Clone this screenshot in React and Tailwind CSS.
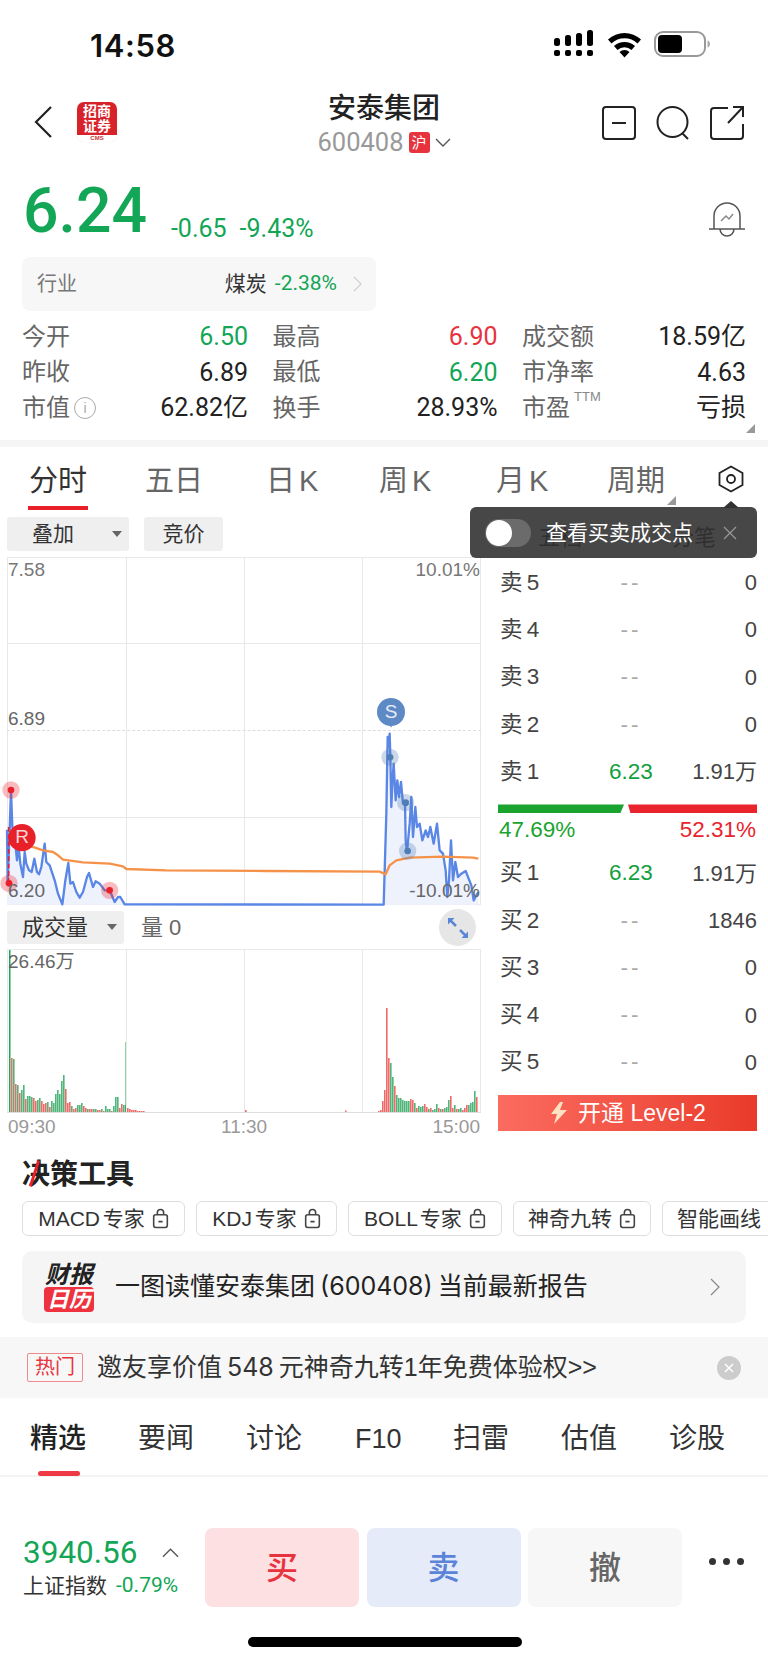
import React from "react";

const GREEN = "text-[#12a656]";
const RED = "text-[#e8333f]";

// price line, in 3x chart coordinates (viewBox below)
const PRICE = [
  [22,1168],[24,1325],[30,1170],[34,1050],[38,1160],[45,1190],[52,1260],[57,1220],[62,1270],[70,1310],[75,1235],[80,1270],[88,1290],[96,1295],[104,1255],[112,1295],[118,1302],[125,1280],[135,1210],[140,1265],[150,1275],[165,1320],[175,1360],[188,1392],[197,1320],[206,1268],[212,1330],[220,1325],[230,1355],[240,1372],[250,1355],[262,1310],[268,1298],[280,1340],[288,1323],[300,1330],[315,1350],[330,1350],[345,1385],[355,1370],[362,1370],[375,1392],
  [1152,1393],[1160,1120],[1164,890],[1166,920],[1170,880],[1172,950],[1175,1100],[1178,1030],[1182,970],[1188,1080],[1193,1020],[1198,1070],[1204,1025],[1210,1090],[1216,1085],[1218,1200],[1222,1235],[1230,1150],[1235,1070],[1240,1190],[1247,1100],[1252,1160],[1260,1150],[1268,1200],[1278,1170],[1285,1190],[1292,1160],[1302,1210],[1312,1150],[1320,1230],[1330,1240],[1338,1290],[1343,1370],[1348,1320],[1354,1200],[1360,1320],[1367,1265],[1375,1310],[1385,1300],[1398,1292],[1415,1335],[1422,1380],[1430,1365],[1436,1355],
];
const AVG = [[95,1218],[130,1230],[160,1235],[175,1245],[190,1258],[250,1266],[330,1270],[370,1278],[380,1286],[500,1290],[800,1292],[1140,1294],[1158,1302],[1170,1275],[1190,1260],[1230,1252],[1330,1249],[1420,1252],[1436,1255]];
const toPts = (a) => a.map((p) => p.join(",")).join(" ");

// volume bars: height in px, g/r. two px apart
const VOL_AM = "55r 54g 29r 28g 20r 23g 28g 14r 17g 17g 16g 15r 12r 13g 15g 12r 9r 10r 11g 6r 12g 10g 19g 23g 19g 32g 38g 24r 10r 11r 7g 4r 5r 8g 8g 10g 7r 5r 4g 4r 4r 4g 4g 3r 3r 4g 2r 7g 4g 4g 2r 7g 16g 16g 5r 9r 8g 8g".split(" ");
const VOL_AM2 = "5r 4r 3r 3r 3r 2r 2r 2r 2r 1r 1r 1r 1r 1r 1r".split(" ");
const VOL_PM = "1r 1r 1r 1r 2r 3r 12r 23r 105r 55r 50g 36g 27r 18g 15g 15g 13g 12g 12g 12g 14r 13r 10g 5r 7g 6g 7g 9r 6r 4g 5r 3g 4g 9g 5r 4g 4r 5g 6g 13g 17r 5r 8g 4r 4g 5g 3r 5r 8r 8g 10g 11g 22g 16r".split(" ");

function Volume() {
  const bars = [];
  VOL_AM.forEach((v, i) => bars.push([11 + i * 2, v]));
  VOL_AM2.forEach((v, i) => bars.push([127 + i * 2, v]));
  for (let x = 157; x < 370; x += 2) {
    const h = x === 245 ? 3 : x === 345 ? 2.5 : 1;
    bars.push([x, h + "r"]);
  }
  VOL_PM.forEach((v, i) => bars.push([370 + i * 2, v]));
  return (
    <svg viewBox="0 0 474 163" className="block w-[474px] h-[163px]">
      {bars.map(([x, v], i) => {
        const h = parseFloat(v);
        return <rect key={i} x={x - 7} y={163 - h} width="1.6" height={h} fill={v.endsWith("g") ? "#4fb57a" : "#f06a6a"} />;
      })}
      <rect x="2" y="0" width="1.5" height="163" fill="#1fa855" />
      <rect x="118.5" y="92" width="1.5" height="71" fill="#1fa855" />
    </svg>
  );
}

const Grid = ({ className = "" }) => (
  <div className={`absolute inset-0 grid grid-cols-[119px_118px_118px_1fr] border border-[#e8e8e8] ${className}`}>
    <div className="border-r border-[#e8e8e8]" />
    <div className="border-r border-[#e8e8e8]" />
    <div className="border-r border-[#e8e8e8]" />
    <div />
  </div>
);

function PriceChart() {
  const fill = `22,1393 ${toPts(PRICE)} 1436,1393`;
  return (
    <div className="relative w-[474px] h-[348px]">
      <Grid />
      <div className="absolute inset-x-0 top-[86px] border-t border-[#e8e8e8]" />
      <div className="absolute inset-x-0 top-[173px] border-t border-dashed border-[#dcdcdc]" />
      <div className="absolute inset-x-0 top-[260px] border-t border-[#e8e8e8]" />
      <svg viewBox="22 350 1422 1044" className="absolute inset-0 w-[474px] h-[348px] overflow-visible">
        <polygon points={fill} fill="#eef2fd" />
        <polyline points={toPts(PRICE)} fill="none" stroke="#5a86e6" strokeWidth="7" strokeLinejoin="round" />
        <polyline points={toPts(AVG)} fill="none" stroke="#f5924a" strokeWidth="7" strokeLinejoin="round" />
        <line x1="27" y1="1160" x2="27" y2="1329" stroke="#e8202a" strokeWidth="5" strokeDasharray="14 8" />
        {[[34,1049],[28,1329],[330,1350]].map(([x, y]) => (
          <g key={x}>
            <circle cx={x} cy={y} r="26" fill="#e8202a" opacity="0.3" />
            <circle cx={x} cy={y} r="10" fill="#e8202a" />
          </g>
        ))}
        {[[1171,951],[1218,1087],[1224,1232]].map(([x, y]) => (
          <g key={x}>
            <circle cx={x} cy={y} r="26" fill="#4f7db5" opacity="0.3" />
            <circle cx={x} cy={y} r="10" fill="#4f7db5" />
          </g>
        ))}
        <circle cx="67" cy="1192" r="41" fill="#e8202a" />
        <path d="M1168 850h12l-6 12z" fill="#5d89c4" />
        <circle cx="1174" cy="815" r="42" fill="#5d89c4" />
      </svg>
      <span className="absolute left-[7px] top-[269px] w-[16px] text-center text-[19px] leading-[22px] text-[#f7d6d6]">R</span>
      <span className="absolute left-[376px] top-[144px] w-[16px] text-center text-[19px] leading-[22px] text-[#e6edf7]">S</span>
      <span className="absolute left-[1px] top-[2px] text-[19px] leading-[22px] text-[#777]">7.58</span>
      <span className="absolute right-[1px] top-[2px] text-[19px] leading-[22px] text-[#777]">10.01%</span>
      <span className="absolute left-[1px] top-[151px] text-[19px] leading-[22px] text-[#666]">6.89</span>
      <span className="absolute left-[1px] top-[323px] text-[19px] leading-[22px] text-[#666]">6.20</span>
      <span className="absolute right-[1px] top-[323px] text-[19px] leading-[22px] text-[#666]">-10.01%</span>
    </div>
  );
}

const Tri = () => (
  <svg viewBox="0 0 10 6" className="w-[10px] h-[6px] shrink-0"><path d="M0 0h10L5 6z" fill="#666" /></svg>
);

const Chevron = ({ className = "" }) => (
  <svg viewBox="0 0 10 18" className={className} fill="none" stroke="currentColor" strokeWidth="1.2"><path d="M1 1l8 8-8 8" /></svg>
);

const Stat = ({ label, value, color = "text-[#222]" }) => (
  <div className="flex items-center justify-between h-[35.5px]">
    {label}
    <span className={`text-[25px] font-['Roboto','Noto_Sans_CJK_SC',sans-serif] ${color}`}>{value}</span>
  </div>
);
const L = ({ children }) => <span className="text-[24px] text-[#666]">{children}</span>;

const BookRow = ({ label, price, vol }) => (
  <div className="grid grid-cols-[86px_94px_1fr] items-center h-[47.3px] text-[22.5px]">
    <span className="text-[#444] pl-[2px] [word-spacing:-2px]">{label}</span>
    <span className={`text-center ${price ? "text-[#12a03f]" : "text-[#aaa] tracking-[3px]"}`}>{price || "--"}</span>
    <span className="text-right text-[#444] text-[22px]">{vol}</span>
  </div>
);

const Lock = () => (
  <svg viewBox="0 0 16 20" className="w-[17px] h-[21px] shrink-0" fill="none" stroke="#444" strokeWidth="1.5">
    <rect x="1.5" y="6.5" width="13" height="12" rx="2" />
    <path d="M5 6.5V4.5a3 3 0 0 1 6 0v2M6 13h4" />
  </svg>
);

const Chip = ({ children, w, lock = true }) => (
  <div className={`flex items-center justify-center gap-[7px] h-[35px] border border-[#dedede] rounded-[6px] text-[21px] text-[#333] shrink-0 [word-spacing:-3px] ${w}`}>
    <span>{children}</span>
    {lock && <Lock />}
  </div>
);

export default function App() {
  return (
    <div className="relative w-[768px] h-[1662px] overflow-hidden bg-white font-['Liberation_Sans','Noto_Sans_CJK_SC',sans-serif]">
      {/* status bar */}
      <div className="flex items-start justify-between h-[90px] pl-[90px] pr-[57px] pt-[30px]">
        <span className="text-[31px] leading-[32px] font-semibold tracking-[0.6px] text-[#111] font-['Inter',sans-serif]">14:58</span>
        <svg viewBox="0 0 158 28" className="w-[158px] h-[28px]">
          {[[0,8,7],[11,5,10],[22,3,12],[33,0,15]].map(([x, y, h]) => (
            <rect key={x} x={x + 1} y={y} width="6" height={h + 1} rx="2.5" fill="#000" />
          ))}
          {[1, 12, 23, 34].map((x) => <rect key={x} x={x} y="20" width="6" height="6" rx="2" fill="#000" />)}
          <path d="M55 9.5a24 24 0 0 1 33 0l-3.5 4a18.5 18.5 0 0 0-26 0zM61 16a15.500 15.500 0 0 1 21 0l-3.500 4a10 10 0 0 0-14 0zM66.500 22a7 7 0 0 1 10 0l-5 5.500z" fill="#000" />
          <rect x="102" y="2" width="50" height="24" rx="8" fill="none" stroke="#999" strokeWidth="2" />
          <rect x="105" y="5" width="24" height="18" rx="4" fill="#000" />
          <path d="M154.500 10.500c2 .5 2.500 2 2.500 3.500s-.5 3-2.500 3.500z" fill="#aaa" />
        </svg>
      </div>

      {/* title bar */}
      <div className="flex items-start h-[70px] pl-[34px] pr-[24px]">
        <div className="flex items-center w-[240px] pt-[12px]">
          <svg viewBox="0 0 18 32" className="w-[18px] h-[32px] text-[#222]" fill="none" stroke="currentColor" strokeWidth="2.2"><path d="M17 1L2 16l15 15" /></svg>
          <div className="ml-[25px] w-[40px] h-[40px] rounded-[7px] bg-white overflow-hidden flex flex-col shadow-[0_0_1px_#ddd]">
            <div className="h-[33px] bg-[#d8222a] text-white text-[14px] leading-[15px] font-bold font-['Liberation_Serif','Noto_Sans_CJK_SC',serif] text-center pt-[2px]">招商<br />证券</div>
            <div className="h-[7px] text-[6px] leading-[7px] text-center font-bold text-[#c33]">CMS</div>
          </div>
        </div>
        <div className="w-[220px] flex flex-col items-center pt-[3px]">
          <div className="text-[28px] leading-[32px] font-medium text-[#222]">安泰集团</div>
          <div className="flex items-center h-[24px] mt-[5px]">
            <span className="text-[25.5px] text-[#999] font-['Roboto',sans-serif]">600408</span>
            <span className="ml-[5px] w-[21px] h-[21px] rounded-[3px] bg-[#e8333f] text-white text-[15px] leading-[21px] text-center">沪</span>
            <svg viewBox="0 0 16 9" className="ml-[5px] w-[16px] h-[9px]" fill="none" stroke="#555" strokeWidth="1.4"><path d="M1 1l7 7 7-7" /></svg>
          </div>
        </div>
        <div className="ml-auto flex items-center gap-[20px] pt-[16px]">
          <svg viewBox="0 0 34 34" className="w-[34px] h-[34px]" fill="none" stroke="#222" strokeWidth="2"><rect x="1" y="1" width="32" height="32" rx="3" /><path d="M10 17h14" /></svg>
          <svg viewBox="0 0 34 34" className="w-[34px] h-[34px]" fill="none" stroke="#222" strokeWidth="2"><circle cx="16.500" cy="16" r="15" /><path d="M26 27l6 6" /></svg>
          <svg viewBox="0 0 34 34" className="w-[34px] h-[34px]" fill="none" stroke="#222" strokeWidth="2"><path d="M18 2H4a3 3 0 0 0-3 3v25a3 3 0 0 0 3 3h26a3 3 0 0 0 3-3V18M18 17L33 1M23 1h10v10" /></svg>
        </div>
      </div>

      {/* price */}
      <div className="flex items-end h-[97px] pl-[23px] pr-[23px] pb-[14px]">
        <span className={`text-[62.5px] leading-[64px] font-medium font-['Roboto',sans-serif] ${GREEN}`}>6.24</span>
        <span className={`ml-[24px] text-[25px] leading-[28px] font-['Roboto',sans-serif] ${GREEN}`}>-0.65</span>
        <span className={`ml-[13px] text-[25px] leading-[28px] font-['Roboto',sans-serif] ${GREEN}`}>-9.43%</span>
        <svg viewBox="0 0 36 38" className="ml-auto mb-[3px] w-[36px] h-[38px]" fill="none" stroke="#555" strokeWidth="1.5">
          <path d="M5 27V14a13 13 0 0 1 26 0v13M0 27h36M11 27a7 7 0 0 0 14 0" />
          <path d="M12 19l5-5 3 3 4-5" stroke="#888" />
        </svg>
      </div>

      {/* industry */}
      <div className="ml-[22px] w-[354px] h-[54px] rounded-[8px] bg-[#f7f7f7] flex items-center pl-[15px] pr-[14px]">
        <span className="text-[20px] text-[#777]">行业</span>
        <span className="ml-auto text-[21px] text-[#333]">煤炭</span>
        <span className={`ml-[8px] text-[21px] font-['Roboto',sans-serif] ${GREEN}`}>-2.38%</span>
        <Chevron className="ml-[16px] w-[9px] h-[18px] text-[#ccc]" />
      </div>

      {/* stats */}
      <div className="relative grid grid-cols-[226px_225px_224px] gap-x-[24.500px] h-[129px] pl-[22px] pt-[8px]">
        <div>
          <Stat label={<L>今开</L>} value="6.50" color={GREEN} />
          <Stat label={<L>昨收</L>} value="6.89" />
          <Stat label={<span className="flex items-center gap-[4px]"><L>市值</L><span className="w-[22px] h-[22px] rounded-full border border-[#aaa] text-[#aaa] text-[14px] leading-[20px] text-center">i</span></span>} value="62.82亿" />
        </div>
        <div>
          <Stat label={<L>最高</L>} value="6.90" color={RED} />
          <Stat label={<L>最低</L>} value="6.20" color={GREEN} />
          <Stat label={<L>换手</L>} value="28.93%" />
        </div>
        <div>
          <Stat label={<L>成交额</L>} value="18.59亿" />
          <Stat label={<L>市净率</L>} value="4.63" />
          <Stat label={<span className="flex items-start"><L>市盈</L><span className="ml-[4px] text-[13px] leading-[14px] text-[#888]">TTM</span></span>} value="亏损" />
        </div>
        <svg viewBox="0 0 9 9" className="absolute left-[746px] top-[113px] w-[9px] h-[9px]"><path d="M9 0v9H0z" fill="#999" /></svg>
      </div>
      <div className="h-[7px] bg-[#f5f5f5]" />

      {/* period tabs */}
      <div className="relative flex h-[70px] text-[29px] leading-[32px] text-[#666] [word-spacing:-4px]">
        <div className="absolute left-[29px] top-[18px] text-[#333]">分时</div>
        <div className="absolute left-[28px] top-[59px] w-[60px] h-[4px] bg-[#e8202a]" />
        <div className="absolute left-[145px] top-[18px]">五日</div>
        <div className="absolute left-[266px] top-[18px]">日 K</div>
        <div className="absolute left-[379px] top-[18px]">周 K</div>
        <div className="absolute left-[496px] top-[18px]">月 K</div>
        <div className="absolute left-[607px] top-[18px]">周期</div>
        <svg viewBox="0 0 9 9" className="absolute left-[667px] top-[49px] w-[9px] h-[9px]"><path d="M9 0v9H0z" fill="#999" /></svg>
        <svg viewBox="0 0 28 28" className="absolute left-[717px] top-[18px] w-[28px] h-[28px]" fill="none" stroke="#222" strokeWidth="1.800">
          <path d="M14 1.500L25.500 8v12L14 26.500 2.500 20V8z" />
          <circle cx="14" cy="14" r="4" />
        </svg>
      </div>

      {/* toolbar + chart + order book */}
      <div className="flex h-[633px]">
        <div className="ml-[7px] w-[474px] shrink-0">
          <div className="flex gap-[15px] h-[34px] mb-[6px]">
            <div className="relative flex items-center justify-center w-[122px] rounded-[3px] bg-[#efefef] text-[21px] text-[#333] pr-[30px]">
              叠加
              <span className="absolute right-[7px] top-[14px] flex"><Tri /></span>
            </div>
            <div className="flex items-center justify-center w-[79px] rounded-[3px] bg-[#efefef] text-[21px] text-[#333]">竞价</div>
          </div>
          <PriceChart />
          <div className="relative flex items-center h-[33px] mt-[6px] mb-[5px]">
            <div className="relative flex items-center w-[117px] h-full rounded-[3px] bg-[#efefef] text-[22px] text-[#333] pl-[15px]">
              成交量
              <span className="absolute right-[7px] top-[13px] flex"><Tri /></span>
            </div>
            <span className="ml-[17px] text-[22px] text-[#666]">量 0</span>
            <div className="absolute right-[5px] top-[-2px] w-[37px] h-[37px] rounded-full bg-[#e6e6e6] flex items-center justify-center">
              <svg viewBox="0 0 24 24" className="w-[24px] h-[24px]" fill="none" stroke="#5a86d8" strokeWidth="2.500">
                <path d="M4 4l6 6M20 20l-6-6" />
                <path d="M2 8.500V2h6.500zM22 15.500V22h-6.500z" fill="#5a86d8" stroke="none" />
              </svg>
            </div>
          </div>
          <div className="relative w-[474px] h-[164px] pt-[1px]">
            <Grid className="border-b-[#ddd]" />
            <Volume />
            <span className="absolute left-[1px] top-[2px] text-[19px] leading-[22px] text-[#666]">26.46万</span>
          </div>
          <div className="relative h-[30px] pt-[3px] text-[19px] leading-[22px] text-[#999]">
            <span className="absolute left-[1px]">09:30</span>
            <span className="absolute left-[214px]">11:30</span>
            <span className="absolute right-[1px]">15:00</span>
          </div>
        </div>

        <div className="ml-[17px] w-[259px]">
          <div className="flex justify-between h-[42px] pl-[40px] pr-[41px] pt-[4px] text-[22px] text-[#111]"><span>五档</span><span>分笔</span></div>
          <BookRow label="卖 5" vol="0" />
          <BookRow label="卖 4" vol="0" />
          <BookRow label="卖 3" vol="0" />
          <BookRow label="卖 2" vol="0" />
          <BookRow label="卖 1" price="6.23" vol="1.91万" />
          <div className="flex h-[9px] mt-[9px]">
            <div className="w-[126px] bg-[#1ba32f] [clip-path:polygon(0_0,100%_0,97%_100%,0_100%)] -mr-[1px]" />
            <div className="flex-1 ml-[5px] bg-[#e9242c] [clip-path:polygon(0_0,100%_0,100%_100%,2%_100%)]" />
          </div>
          <div className="flex justify-between h-[24px] mt-[5px] mb-[7px] text-[22.5px] leading-[24px] px-[1px]">
            <span className="text-[#1ba32f]">47.69%</span>
            <span className="text-[#e9242c]">52.31%</span>
          </div>
          <BookRow label="买 1" price="6.23" vol="1.91万" />
          <BookRow label="买 2" vol="1846" />
          <BookRow label="买 3" vol="0" />
          <BookRow label="买 4" vol="0" />
          <BookRow label="买 5" vol="0" />
          <div className="flex items-center justify-center gap-[9px] h-[36px] mt-[9px] bg-gradient-to-r from-[#fb6b5f] to-[#e93a2a] text-[23px] text-white">
            <svg viewBox="0 0 20 24" className="w-[20px] h-[24px]"><path d="M11 1L2 13h6l-3 10 13-14h-7l3-8z" fill="#fde3c4" /></svg>
            开通 Level-2
          </div>
        </div>
      </div>

      {/* tip over the chart tabs */}
      <div className="absolute left-[470px] top-[507px] w-[287px] h-[51px] rounded-[6px] bg-[#333333]/90 flex items-center pl-[15px] pr-[20px]">
        <div className="w-[46px] h-[28px] rounded-full bg-[#6b6b6b] relative">
          <div className="absolute left-[1px] top-[1px] w-[26px] h-[26px] rounded-full bg-white" />
        </div>
        <span className="ml-[15px] text-[21px] text-white">查看买卖成交点</span>
        <svg viewBox="0 0 14 14" className="ml-auto w-[14px] h-[14px]" fill="none" stroke="#999" strokeWidth="1.200"><path d="M1 1l12 12M13 1L1 13" /></svg>
        <svg viewBox="0 0 16 7" className="absolute left-[253px] top-[-6px] w-[16px] h-[7px]"><path d="M0 7L8 0l8 7z" fill="#333" /></svg>
      </div>

      {/* tools */}
      <div className="relative h-[51px] pl-[22px] pt-[9px] text-[28px] leading-[32px] font-bold text-[#222]">
        决策工具
        <span className="absolute left-[33px] top-[10px] w-[3px] h-[27px] bg-[#e8202a] rotate-[18deg]" />
      </div>
      <div className="flex gap-[11px] pl-[22px] overflow-hidden">
        <Chip w="w-[163px]">MACD 专家</Chip>
        <Chip w="w-[141px]">KDJ 专家</Chip>
        <Chip w="w-[154px]">BOLL 专家</Chip>
        <Chip w="w-[138px]">神奇九转</Chip>
        <Chip w="w-[140px] !justify-start pl-[14px]" lock={false}>智能画线</Chip>
      </div>
      <div className="mt-[15px] ml-[22px] w-[724px] h-[72px] rounded-[10px] bg-[#f5f5f5] flex items-center pl-[22px] pr-[26px]">
        <div className="relative w-[50px] h-[50px] flex flex-col items-center italic font-bold shrink-0">
          <span className="text-[24px] leading-[25px] text-[#222] whitespace-nowrap">财报</span>
          <span className="w-[50px] h-[25px] rounded-[4px] bg-[#ee3240] text-white text-[22px] leading-[25px] text-center">日历</span>
        </div>
        <span className="ml-[21px] text-[25px] text-[#222] whitespace-nowrap">一图读懂安泰集团<span className="mx-[5px] font-['Inter',sans-serif]">(600408)</span>当前最新报告</span>
        <Chevron className="ml-auto w-[10px] h-[18px] text-[#888]" />
      </div>
      <div className="mt-[14px] h-[61px] bg-[#f7f7f7] flex items-center pl-[27px] pr-[27px]">
        <span className="w-[56px] h-[29px] rounded-[2px] border border-[#ee8a8a] text-[#e8333f] text-[20px] leading-[27px] text-center">热门</span>
        <span className="ml-[14px] text-[25px] text-[#333] whitespace-nowrap">邀友享价值<span className="mx-[5px] font-['Inter',sans-serif]">548</span>元神奇九转1年免费体验权&gt;&gt;</span>
        <span className="ml-auto w-[24px] h-[24px] rounded-full bg-[#ccc] flex items-center justify-center">
          <svg viewBox="0 0 10 10" className="w-[10px] h-[10px]" fill="none" stroke="#fff" strokeWidth="1.500"><path d="M1 1l8 8M9 1L1 9" /></svg>
        </span>
      </div>

      {/* news tabs */}
      <div className="relative h-[79px] border-b-2 border-[#f3f3f3] text-[28px] leading-[32px] text-[#333]">
        <div className="absolute left-[30px] top-[25px] font-medium text-[#222]">精选</div>
        <div className="absolute left-[38px] top-[73px] w-[42px] h-[5px] rounded-full bg-[#ee3a45]" />
        <div className="absolute left-[138px] top-[25px]">要闻</div>
        <div className="absolute left-[246px] top-[25px]">讨论</div>
        <div className="absolute left-[355px] top-[25px] text-[27px]">F10</div>
        <div className="absolute left-[453px] top-[25px]">扫雷</div>
        <div className="absolute left-[561px] top-[25px]">估值</div>
        <div className="absolute left-[669px] top-[25px]">诊股</div>
      </div>

      {/* trade bar */}
      <div className="flex items-start pt-[51px] pl-[23px]">
        <div className="w-[182px] pt-[9px]">
          <div className="flex items-center h-[32px]">
            <span className={`text-[31.5px] leading-[32px] font-['Roboto',sans-serif] ${GREEN}`}>3940.56</span>
            <svg viewBox="0 0 18 10" className="ml-[24px] w-[17px] h-[10px]" fill="none" stroke="#555" strokeWidth="1.400"><path d="M1 9l8-8 8 8" /></svg>
          </div>
          <div className="flex items-center mt-[2px] h-[30px]">
            <span className="text-[21px] text-[#333]">上证指数</span>
            <span className={`ml-[9px] text-[21px] font-['Roboto',sans-serif] ${GREEN}`}>-0.79%</span>
          </div>
        </div>
        <div className="flex gap-[7.500px]">
          <div className={`flex items-center justify-center w-[154px] h-[79px] rounded-[8px] bg-[#fde0e2] text-[32px] font-medium ${RED}`}>买</div>
          <div className="flex items-center justify-center w-[154px] h-[79px] rounded-[8px] bg-[#e5ebf8] text-[32px] font-medium text-[#5b84d8]">卖</div>
          <div className="flex items-center justify-center w-[154px] h-[79px] rounded-[8px] bg-[#f7f7f7] text-[32px] font-medium text-[#666]">撤</div>
        </div>
        <div className="flex gap-[7px] ml-[27px] mt-[30px]">
          <span className="w-[7px] h-[7px] rounded-full bg-[#333]" />
          <span className="w-[7px] h-[7px] rounded-full bg-[#333]" />
          <span className="w-[7px] h-[7px] rounded-full bg-[#333]" />
        </div>
      </div>
      <div className="absolute left-[248px] top-[1637px] w-[274px] h-[10px] rounded-full bg-black" />
    </div>
  );
}
